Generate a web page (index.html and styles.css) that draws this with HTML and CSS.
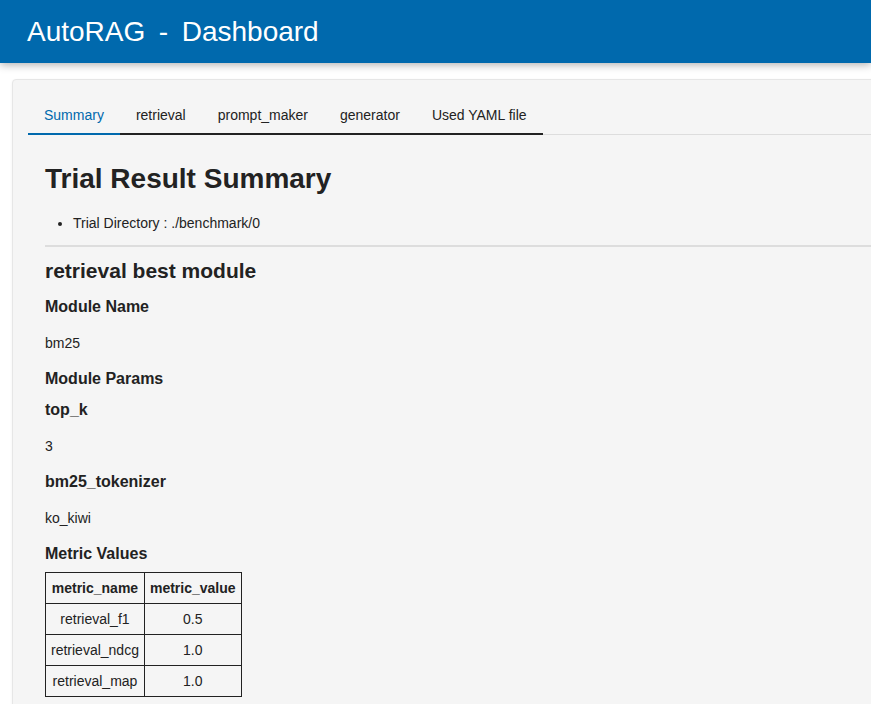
FILE: index.html
```html
<!DOCTYPE html>
<html lang="en">
<head>
<meta charset="utf-8">
<title>AutoRAG - Dashboard</title>
<link rel="stylesheet" href="styles.css">
</head>
<body>
<header class="topbar">
  <h1 class="brand">AutoRAG  -  Dashboard</h1>
</header>
<main class="page">
  <section class="card">
    <nav class="tabs">
      <a class="tab active">Summary</a>
      <a class="tab">retrieval</a>
      <a class="tab">prompt_maker</a>
      <a class="tab">generator</a>
      <a class="tab">Used YAML file</a>
    </nav>
    <div class="panel">
      <h1 class="title">Trial Result Summary</h1>
      <ul class="meta">
        <li>Trial Directory : ./benchmark/0</li>
      </ul>
      <hr class="rule">
      <h2 class="node">retrieval best module</h2>
      <h3 class="label">Module Name</h3>
      <p class="value">bm25</p>
      <h3 class="label">Module Params</h3>
      <h3 class="label">top_k</h3>
      <p class="value">3</p>
      <h3 class="label">bm25_tokenizer</h3>
      <p class="value">ko_kiwi</p>
      <h3 class="label">Metric Values</h3>
      <table class="metrics">
        <thead>
          <tr><th>metric_name</th><th>metric_value</th></tr>
        </thead>
        <tbody>
          <tr><td>retrieval_f1</td><td>0.5</td></tr>
          <tr><td>retrieval_ndcg</td><td>1.0</td></tr>
          <tr><td>retrieval_map</td><td>1.0</td></tr>
        </tbody>
      </table>
    </div>
  </section>
</main>
</body>
</html>
```
FILE: styles.css
```css
html, body {
  margin: 0;
  padding: 0;
  background: #ffffff;
  font-family: "Liberation Sans", Arial, sans-serif;
  color: #222222;
  overflow: hidden;
}

.topbar {
  height: 63px;
  background: #0069ad;
  box-shadow: 0 2px 8px rgba(0, 0, 0, 0.3);
  display: flex;
  align-items: center;
  padding-left: 27px;
  position: relative;
  z-index: 1;
}

.brand {
  margin: 0;
  color: #ffffff;
  font-size: 28px;
  font-weight: normal;
  white-space: pre;
  word-spacing: -1px;
}

.page {
  padding: 16px 0 0 12px;
}

.card {
  width: 1000px;
  background: #f5f5f5;
  border: 1px solid #e6e6e6;
  border-radius: 4px;
  padding: 16px 15px 40px;
  box-shadow: 0 1px 3px rgba(0, 0, 0, 0.06);
}

.tabs {
  display: flex;
  border-bottom: 1px solid #dddddd;
}

.tab {
  font-size: 14px;
  color: #222222;
  padding: 11px 16px 10px;
  border-bottom: 2px solid #222222;
  margin-bottom: -1px;
  line-height: 16px;
}

.tab.active {
  color: #0069ad;
  border-bottom-color: #0069ad;
}

.panel {
  padding: 0 17px;
}

.title {
  font-size: 28px;
  font-weight: bold;
  margin: 28px 0 0;
  line-height: 32px;
}

.meta {
  margin: 20px 0 0;
  padding-left: 28px;
  font-size: 14px;
  line-height: 16px;
}

.rule {
  border: 0;
  border-top: 2px solid #dddddd;
  margin: 14px 0 0;
}

.node {
  font-size: 21px;
  font-weight: bold;
  margin: 12px 0 0;
  line-height: 24px;
}

.label {
  font-size: 16px;
  font-weight: bold;
  margin: 14px 0 0;
  line-height: 20px;
}

.label + .label {
  margin-top: 11px;
}

.value {
  font-size: 14px;
  margin: 18px 0 0;
  line-height: 16px;
}

.value + .label {
  margin-top: 18px;
}

.metrics {
  margin-top: 8px;
  border-collapse: collapse;
  font-size: 14px;
}

.metrics th,
.metrics td {
  border: 1px solid #222222;
  padding: 7px 5px;
  text-align: center;
  line-height: 16px;
}

.metrics th {
  font-weight: bold;
}
```
